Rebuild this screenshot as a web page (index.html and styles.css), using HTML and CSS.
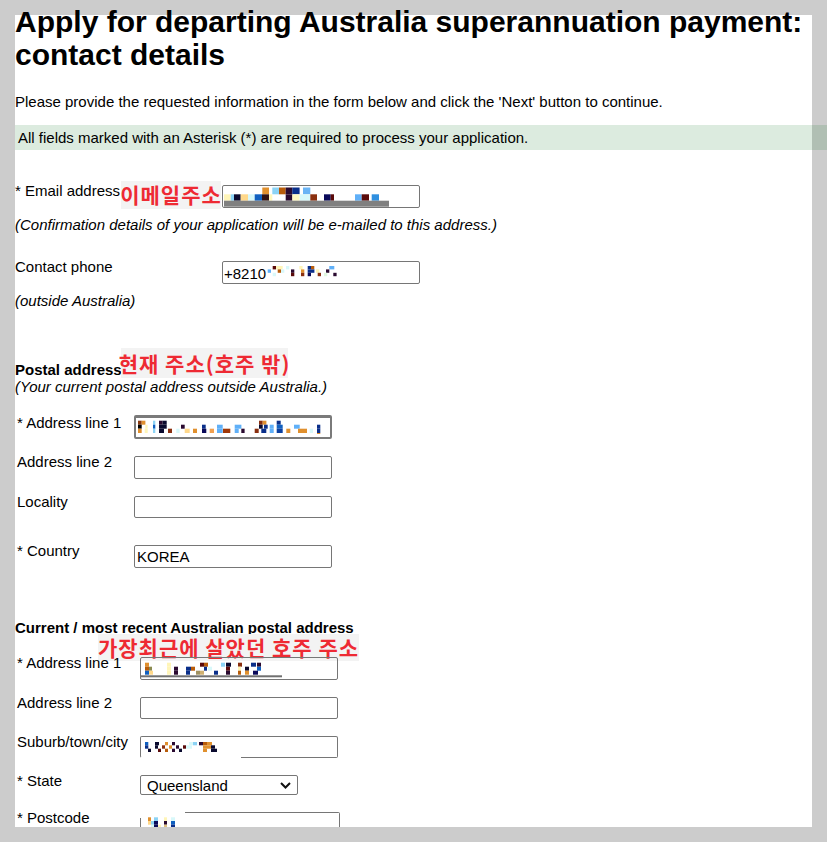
FILE: index.html
```html
<!DOCTYPE html>
<html lang="en">
<head>
  <meta charset="UTF-8" />
  <title>Apply for departing Australia superannuation payment: contact details</title>
  <link rel="stylesheet" href="styles.css">
</head>
<body>

  <div class="page">
    <h1>Apply for departing Australia superannuation payment: contact details</h1>

    <p class="intro">Please provide the requested information in the form below and click the 'Next' button to continue.</p>

    <p class="notice">All fields marked with an Asterisk (*) are required to process your application.</p>

    <!-- contact -->
    <div class="sec-contact">
      <div class="row row-email">
        <label class="lbl">* Email address</label>
        <span class="ko ko-email">이메일주소</span>
        <div class="field">
          <svg width="196" height="21" viewBox="0 0 196 21">
            <rect x="39.3" y="1.5" width="6.7" height="6.8" fill="#e0902e"/>
            <rect x="49.3" y="1.5" width="6.7" height="6.8" fill="#8cd3f5"/>
            <rect x="56" y="1.5" width="6.7" height="6.8" fill="#b85c0a"/>
            <rect x="62.7" y="1.5" width="6.7" height="6.8" fill="#2a0a30"/>
            <rect x="69.3" y="1.5" width="7.3" height="6.8" fill="#0a2f8a"/>
            <rect x="80" y="1.5" width="7.3" height="6.8" fill="#6ab4f5"/>
            <rect x="1" y="8.3" width="6.7" height="6.4" fill="#fff5b8"/>
            <rect x="7.7" y="8.3" width="3.3" height="6.4" fill="#8cd3f5"/>
            <rect x="11" y="8.3" width="6.7" height="6.4" fill="#0a0a2e"/>
            <rect x="17.7" y="8.3" width="7.3" height="6.4" fill="#ffd88a"/>
            <rect x="25" y="8.3" width="6.7" height="6.4" fill="#d8f8fa"/>
            <rect x="31.7" y="8.3" width="7.3" height="6.4" fill="#1060c0"/>
            <rect x="39" y="8.3" width="7" height="6.4" fill="#301010"/>
            <rect x="46" y="8.3" width="3.3" height="6.4" fill="#fff8c0"/>
            <rect x="62.7" y="8.3" width="6.7" height="6.4" fill="#2a0a30"/>
            <rect x="69.3" y="8.3" width="7.3" height="6.4" fill="#fff8c0"/>
            <rect x="76.7" y="8.3" width="10.7" height="6.4" fill="#d8f8fa"/>
            <rect x="87.3" y="8.3" width="6.7" height="6.4" fill="#8a3010"/>
            <rect x="101" y="8.3" width="6.7" height="6.4" fill="#0a0a5a"/>
            <rect x="107.7" y="8.3" width="3.3" height="6.4" fill="#5a0a0a"/>
            <rect x="132" y="8.3" width="6.7" height="6.4" fill="#60b0f8"/>
            <rect x="138.7" y="8.3" width="7.3" height="6.4" fill="#5a0a0a"/>
            <rect x="148.7" y="8.3" width="7.3" height="6.4" fill="#3090e0"/>
            <rect x="1" y="14.7" width="165" height="6" fill="#808080"/>
          </svg>
        </div>
      </div>
      <p class="hint">(Confirmation details of your application will be e-mailed to this address.)</p>

      <div class="row row-phone">
        <label class="lbl">Contact phone</label>
        <div class="field field-text">
          <span>+8210</span>
          <svg width="70" height="11" viewBox="0 0 70 11">
            <rect x="5.7" y="0" width="3.3" height="3.4" fill="#5a0a0a"/>
            <rect x="9" y="0" width="6.7" height="3.4" fill="#fff5b8"/>
            <rect x="19" y="0" width="3.3" height="3.4" fill="#d8f8fa"/>
            <rect x="32.3" y="0" width="3.3" height="3.4" fill="#fff5b8"/>
            <rect x="40.7" y="0" width="3.3" height="3.4" fill="#0a2f8a"/>
            <rect x="44" y="0" width="3.3" height="3.4" fill="#b85c0a"/>
            <rect x="62.3" y="0" width="5" height="3.4" fill="#60b0f8"/>
            <rect x="0.7" y="3.4" width="3.3" height="3.4" fill="#60b0f8"/>
            <rect x="10.7" y="3.4" width="3.3" height="3.4" fill="#b85c0a"/>
            <rect x="14" y="3.4" width="3.3" height="3.4" fill="#d8f8fa"/>
            <rect x="24" y="3.4" width="3.3" height="3.4" fill="#2a0a30"/>
            <rect x="34" y="3.4" width="3.3" height="3.4" fill="#e0902e"/>
            <rect x="40.7" y="3.4" width="6.7" height="3.4" fill="#0a2f8a"/>
            <rect x="49" y="3.4" width="3.3" height="3.4" fill="#fff5b8"/>
            <rect x="59" y="3.4" width="3.3" height="3.4" fill="#2a0a30"/>
            <rect x="5.7" y="6.8" width="3.3" height="3.4" fill="#d8f8fa"/>
            <rect x="24" y="6.8" width="3.3" height="3.4" fill="#5a0a0a"/>
            <rect x="34" y="6.8" width="3.3" height="3.4" fill="#8a3010"/>
            <rect x="40.7" y="6.8" width="3.3" height="3.4" fill="#0a0a5a"/>
            <rect x="50.7" y="6.8" width="3.3" height="3.4" fill="#8a3010"/>
            <rect x="57" y="6.8" width="3.3" height="3.4" fill="#e0f8e0"/>
            <rect x="66.3" y="6.8" width="3.3" height="3.4" fill="#2a0a30"/>
          </svg>
        </div>
      </div>
      <p class="hint">(outside Australia)</p>
    </div>

    <!-- postal address outside Australia -->
    <div class="sec-postal">
      <div class="heading heading-postal">
        <strong>Postal address</strong>
        <span class="ko ko-postal">현재 주소(호주 밖)</span>
      </div>
      <p class="hint hint-tight">(Your current postal address outside Australia.)</p>

      <div class="row row-addr1">
        <label class="lbl lbl-low">* Address line 1</label>
        <div class="field field-thick">
          <svg width="194" height="19" viewBox="0 0 194 19">
            <rect x="2" y="2.7" width="3.7" height="4" fill="#8a3a10"/>
            <rect x="5.7" y="2.7" width="3.7" height="4" fill="#e0902e"/>
            <rect x="17" y="2.7" width="2.3" height="4" fill="#8cd3f5"/>
            <rect x="23" y="2.7" width="3.7" height="4" fill="#2a0a30"/>
            <rect x="26.7" y="2.7" width="4" height="4" fill="#0a0a2e"/>
            <rect x="123" y="2.7" width="3.7" height="4" fill="#8a3010"/>
            <rect x="126.7" y="2.7" width="3.7" height="4" fill="#e0902e"/>
            <rect x="140.7" y="2.7" width="4" height="4" fill="#0a2f8a"/>
            <rect x="2" y="6.7" width="3.7" height="4" fill="#000"/>
            <rect x="9.3" y="6.7" width="2.3" height="4" fill="#fff5b8"/>
            <rect x="17" y="6.7" width="2.3" height="4" fill="#1060c0"/>
            <rect x="23" y="6.7" width="7.7" height="4" fill="#0a0a2e"/>
            <rect x="45" y="6.7" width="3.7" height="4" fill="#2a0a30"/>
            <rect x="66" y="6.7" width="3.7" height="4" fill="#0a2f8a"/>
            <rect x="81" y="6.7" width="5.7" height="4" fill="#60b0f8"/>
            <rect x="98.7" y="6.7" width="6.7" height="4" fill="#60b0f8"/>
            <rect x="123" y="6.7" width="3.7" height="4" fill="#0a0a2e"/>
            <rect x="128" y="6.7" width="3.7" height="4" fill="#0a2f8a"/>
            <rect x="133.7" y="6.7" width="4" height="4" fill="#60b0f8"/>
            <rect x="140.7" y="6.7" width="6" height="4" fill="#1060c0"/>
            <rect x="158" y="6.7" width="5.7" height="4" fill="#60b0f8"/>
            <rect x="181" y="6.7" width="3.3" height="4" fill="#0a2f8a"/>
            <rect x="2" y="10.7" width="3.7" height="4.3" fill="#e0902e"/>
            <rect x="8.7" y="10.7" width="3" height="4.3" fill="#fff5b8"/>
            <rect x="17" y="10.7" width="2.3" height="4.3" fill="#8cd3f5"/>
            <rect x="23" y="10.7" width="5" height="4.3" fill="#0a0a2e"/>
            <rect x="32" y="10.7" width="4" height="4.3" fill="#8a3010"/>
            <rect x="40.3" y="10.7" width="3.3" height="4.3" fill="#d8f8fa"/>
            <rect x="48.7" y="10.7" width="5" height="4.3" fill="#ffd88a"/>
            <rect x="57" y="10.7" width="4" height="4.3" fill="#e0902e"/>
            <rect x="66" y="10.7" width="4.3" height="4.3" fill="#0a0a5a"/>
            <rect x="73.7" y="10.7" width="4.3" height="4.3" fill="#f0a050"/>
            <rect x="81" y="10.7" width="5.7" height="4.3" fill="#60b0f8"/>
            <rect x="87" y="10.7" width="7.3" height="4.3" fill="#a03808"/>
            <rect x="98.7" y="10.7" width="4" height="4.3" fill="#60b0f8"/>
            <rect x="105.3" y="10.7" width="3.3" height="4.3" fill="#2a0a30"/>
            <rect x="118.7" y="10.7" width="4" height="4.3" fill="#8a3010"/>
            <rect x="125.3" y="10.7" width="5" height="4.3" fill="#0a2f8a"/>
            <rect x="133.7" y="10.7" width="4" height="4.3" fill="#60b0f8"/>
            <rect x="140.7" y="10.7" width="6" height="4.3" fill="#0a3fa0"/>
            <rect x="150.3" y="10.7" width="4" height="4.3" fill="#e0902e"/>
            <rect x="162" y="10.7" width="9" height="4.3" fill="#e0902e"/>
            <rect x="173.7" y="10.7" width="3.3" height="4.3" fill="#d8f8fa"/>
            <rect x="181" y="10.7" width="3.3" height="4.3" fill="#0a2f8a"/>
            <rect x="181" y="15" width="3.3" height="1" fill="#e0902e"/>
          </svg>
        </div>
      </div>

      <div class="row row-addr2">
        <label class="lbl">Address line 2</label>
        <input class="input" type="text">
      </div>

      <div class="row row-locality">
        <label class="lbl">Locality</label>
        <input class="input input-short" type="text">
      </div>

      <div class="row row-country">
        <label class="lbl">* Country</label>
        <input class="input" type="text" value="KOREA">
      </div>
    </div>

    <!-- most recent Australian address -->
    <div class="sec-recent">
      <div class="heading heading-recent">
        <strong>Current / most recent Australian postal address</strong>
        <span class="ko ko-recent">가장최근에 살았던 호주 주소</span>
      </div>

      <div class="row row-raddr1">
        <label class="lbl">* Address line 1</label>
        <div class="field">
          <svg width="196" height="21" viewBox="0 0 196 21">
            <rect x="4" y="4.7" width="4" height="4" fill="#e0902e"/>
            <rect x="26" y="4.7" width="4" height="4" fill="#fff5b8"/>
            <rect x="59" y="4.7" width="4" height="4" fill="#5a0a0a"/>
            <rect x="63" y="4.7" width="4" height="4" fill="#b85c0a"/>
            <rect x="80" y="4.7" width="4" height="4" fill="#8cd3f5"/>
            <rect x="85" y="4.7" width="5" height="4" fill="#0a0a2e"/>
            <rect x="97" y="4.7" width="4" height="4" fill="#8a3010"/>
            <rect x="110" y="4.7" width="5" height="4" fill="#0a2f8a"/>
            <rect x="116" y="4.7" width="4" height="4" fill="#2a0a30"/>
            <rect x="4" y="8.7" width="4" height="4" fill="#b85c0a"/>
            <rect x="8" y="8.7" width="3" height="4" fill="#8a8a50"/>
            <rect x="26" y="8.7" width="4" height="4" fill="#fff5b8"/>
            <rect x="33" y="8.7" width="4" height="4" fill="#2a0a30"/>
            <rect x="45" y="8.7" width="5" height="4" fill="#0a2f8a"/>
            <rect x="50" y="8.7" width="4" height="4" fill="#b85c0a"/>
            <rect x="63" y="8.7" width="3" height="4" fill="#0a2f8a"/>
            <rect x="67" y="8.7" width="4" height="4" fill="#d8f8fa"/>
            <rect x="85" y="8.7" width="4" height="4" fill="#5a0a0a"/>
            <rect x="97" y="8.7" width="3" height="4" fill="#fff5b8"/>
            <rect x="104" y="8.7" width="4" height="4" fill="#0a0a2e"/>
            <rect x="116" y="8.7" width="4" height="4" fill="#1060c0"/>
            <rect x="4" y="12.7" width="4" height="4" fill="#1060c0"/>
            <rect x="8" y="12.7" width="4" height="4" fill="#ffd88a"/>
            <rect x="26" y="12.7" width="4" height="4" fill="#fff5b8"/>
            <rect x="33" y="12.7" width="4" height="4" fill="#2a0a30"/>
            <rect x="45" y="12.7" width="4" height="4" fill="#0a2f8a"/>
            <rect x="55" y="12.7" width="4" height="4" fill="#a09060"/>
            <rect x="59" y="12.7" width="4" height="4" fill="#d0b070"/>
            <rect x="73" y="12.7" width="4" height="4" fill="#0a2f8a"/>
            <rect x="85" y="12.7" width="4" height="4" fill="#2a0a30"/>
            <rect x="97" y="12.7" width="3" height="4" fill="#b85c0a"/>
            <rect x="104" y="12.7" width="4" height="4" fill="#e0902e"/>
            <rect x="112" y="12.7" width="5" height="4" fill="#0a0a5a"/>
            <rect x="0" y="17.3" width="141" height="2" fill="#707070"/>
          </svg>
        </div>
      </div>

      <div class="row row-raddr2">
        <label class="lbl">Address line 2</label>
        <input class="input input-short" type="text">
      </div>

      <div class="row row-suburb">
        <label class="lbl">Suburb/town/city</label>
        <div class="field field-suburb">
          <svg width="196" height="21" viewBox="0 0 196 21">
            <rect x="4" y="5" width="3.3" height="3.3" fill="#1060c0"/>
            <rect x="14" y="5" width="4" height="3.3" fill="#0a0a2e"/>
            <rect x="24" y="5" width="3" height="3.3" fill="#e0902e"/>
            <rect x="31" y="5" width="3" height="3.3" fill="#2a0a30"/>
            <rect x="48" y="5" width="4" height="3.3" fill="#d8f8fa"/>
            <rect x="52" y="5" width="4" height="3.3" fill="#8cd3f5"/>
            <rect x="58" y="5" width="4" height="3.3" fill="#2a0a30"/>
            <rect x="62" y="5" width="4" height="3.3" fill="#b85c0a"/>
            <rect x="66" y="5" width="5" height="3.3" fill="#e0902e"/>
            <rect x="4" y="8.3" width="3.3" height="3.4" fill="#0a2f8a"/>
            <rect x="14" y="8.3" width="3" height="3.4" fill="#0a0a2e"/>
            <rect x="21" y="8.3" width="3" height="3.4" fill="#8a3010"/>
            <rect x="28" y="8.3" width="3" height="3.4" fill="#e0902e"/>
            <rect x="35" y="8.3" width="3" height="3.4" fill="#2a0a30"/>
            <rect x="42" y="8.3" width="3" height="3.4" fill="#5a0a0a"/>
            <rect x="45" y="8.3" width="6" height="3.4" fill="#d8f8fa"/>
            <rect x="62" y="8.3" width="8" height="3.4" fill="#e0902e"/>
            <rect x="70" y="8.3" width="4" height="3.4" fill="#0a0a2e"/>
            <rect x="7" y="11.7" width="3" height="3.3" fill="#0a0a2e"/>
            <rect x="17" y="11.7" width="3" height="3.3" fill="#5a0a0a"/>
            <rect x="24" y="11.7" width="3" height="3.3" fill="#b85c0a"/>
            <rect x="31" y="11.7" width="3" height="3.3" fill="#2a0a30"/>
            <rect x="38" y="11.7" width="3" height="3.3" fill="#0a0a2e"/>
            <rect x="62" y="11.7" width="4" height="3.3" fill="#e0902e"/>
            <rect x="70" y="11.7" width="6" height="3.3" fill="#0a0a2e"/>
          </svg>
        </div>
      </div>

      <div class="row row-state">
        <label class="lbl">* State</label>
        <div class="select-wrap">
          <select class="select">
            <option>Queensland</option>
          </select>
          <svg class="chevron" width="11" height="7" viewBox="0 0 11 7">
            <path d="M1 1 L5.5 5.5 L10 1" fill="none" stroke="#111" stroke-width="2"/>
          </svg>
        </div>
      </div>

      <div class="row row-postcode">
        <label class="lbl">* Postcode</label>
        <div class="field field-postcode">
          <svg width="198" height="21" viewBox="0 0 198 21">
            <rect x="7" y="4.3" width="3" height="3.7" fill="#e0902e"/>
            <rect x="13" y="4.3" width="4" height="3.7" fill="#8cd3f5"/>
            <rect x="23" y="4.3" width="3" height="3.7" fill="#fff5b8"/>
            <rect x="30" y="4.3" width="4" height="3.7" fill="#d8f8fa"/>
            <rect x="7" y="8" width="3" height="3.7" fill="#ffd88a"/>
            <rect x="10" y="8" width="3" height="3.7" fill="#8cd3f5"/>
            <rect x="13" y="8" width="4" height="3.7" fill="#0a0a5a"/>
            <rect x="23" y="8" width="3" height="3.7" fill="#2a0a30"/>
            <rect x="30" y="8" width="4" height="3.7" fill="#1060c0"/>
            <rect x="10" y="11.7" width="3" height="3.7" fill="#d8f8fa"/>
            <rect x="13" y="11.7" width="4" height="3.7" fill="#0a0a5a"/>
            <rect x="17" y="11.7" width="3" height="3.7" fill="#fff5b8"/>
            <rect x="23" y="11.7" width="3" height="3.7" fill="#e0c080"/>
            <rect x="30" y="11.7" width="4" height="3.7" fill="#0a2f8a"/>
          </svg>
        </div>
      </div>
    </div>
  </div>

</body>
</html>
```

FILE: styles.css
```css
body {
  margin: 0;
  background-color: #cccccc;
  font-family: "Liberation Sans", Arial, sans-serif;
  font-size: 15px;
  line-height: 17px;
  color: #000;
}

.page {
  display: flow-root;
  height: 812px;
  margin: 15px 15px 0 15px;
  background-color: #fff;
}

h1 {
  margin: -10px 0 0;
  font-size: 30px;
  line-height: 33px;
  font-weight: bold;
}

p {
  margin: 0;
}

.intro {
  margin-top: 22px;
}

.notice {
  margin: 15px -15px 0 0;
  padding-left: 3px;
  height: 25px;
  line-height: 25px;
  background-color: rgba(0, 109, 22, 0.137);
}

.row {
  position: relative;
  display: flex;
  align-items: flex-start;
}

.lbl {
  flex-shrink: 0;
  margin-top: -3px;
}

.lbl-low {
  margin-top: -1px;
}

.hint {
  margin-top: 8px;
  font-style: italic;
}

.hint-tight {
  margin-top: 0;
}

/* korean notes pasted over the form */
.ko {
  position: absolute;
  display: flex;
  align-items: center;
  justify-content: center;
  background-color: #f3f3f3;
  color: #ee2a33;
  font-family: "Noto Sans CJK KR", sans-serif;
  font-size: 21px;
  font-weight: bold;
  letter-spacing: 1px;
  white-space: nowrap;
}

.ko-email {
  left: 106px;
  top: -4px;
  width: 100px;
  height: 28px;
  align-items: flex-start;
  line-height: 26px;
}

.ko-postal {
  left: 106px;
  top: -13px;
  width: 167px;
  height: 30px;
}

.ko-recent {
  left: 83px;
  top: 15px;
  width: 261px;
  height: 27px;
}

.heading {
  position: relative;
}

/* fields */
.field,
.input {
  box-sizing: border-box;
  width: 198px;
  height: 23px;
  border: 1px solid #767676;
  border-radius: 2px;
  background: transparent;
  overflow: hidden;
}

.field svg {
  display: block;
}

.input {
  margin: 0;
  padding: 1px 2px;
  font-family: "Liberation Sans", Arial, sans-serif;
  font-size: 15px;
  color: #000;
}

.input-short {
  height: 22px;
}

.field-text {
  display: flex;
  align-items: center;
  padding-left: 1px;
}

.field-text span {
  margin-top: 1px;
}

.field-text svg {
  margin: -2px 0 0 1px;
}

.field-thick {
  height: 24px;
  border: 2px solid #7a7a7a;
  border-top-width: 3px;
}

.field-suburb {
  height: 22px;
  border-bottom-color: transparent;
  background: linear-gradient(#767676, #767676) no-repeat right bottom / 97px 1px;
  background-origin: border-box;
}

.field-postcode {
  width: 200px;
  border-top-color: transparent;
  border-left-color: transparent;
  background:
    linear-gradient(#767676, #767676) no-repeat right top / 155px 1px,
    linear-gradient(#767676, #767676) no-repeat left bottom / 1px 17px;
  background-origin: border-box;
}

.select-wrap {
  position: relative;
}

.select {
  appearance: none;
  box-sizing: border-box;
  width: 158px;
  height: 20px;
  margin: 0;
  padding: 0 0 0 6px;
  border: 1px solid #767676;
  border-radius: 2px;
  background-color: #fff;
  font-family: "Liberation Sans", Arial, sans-serif;
  font-size: 15px;
  color: #000;
}

.chevron {
  position: absolute;
  right: 7px;
  top: 7px;
  pointer-events: none;
}

/* section columns */
.sec-contact .lbl {
  width: 207px;
}

.sec-postal .lbl {
  width: 117px;
  padding-left: 2px;
}

.sec-recent .lbl {
  width: 123px;
  padding-left: 2px;
}

/* vertical rhythm */
.row-email { margin-top: 35px; }
.row-phone { margin-top: 28px; }
.heading-postal { margin-top: 52px; }
.row-addr1 { margin-top: 20px; }
.row-addr2 { margin-top: 17px; }
.row-locality { margin-top: 17px; }
.row-country { margin-top: 27px; }
.heading-recent { margin-top: 51px; }
.row-raddr1 { margin-top: 21px; }
.row-raddr2 { margin-top: 17px; }
.row-suburb { margin-top: 17px; }
.row-state { margin-top: 17px; }
.row-postcode { margin-top: 17px; }
```
